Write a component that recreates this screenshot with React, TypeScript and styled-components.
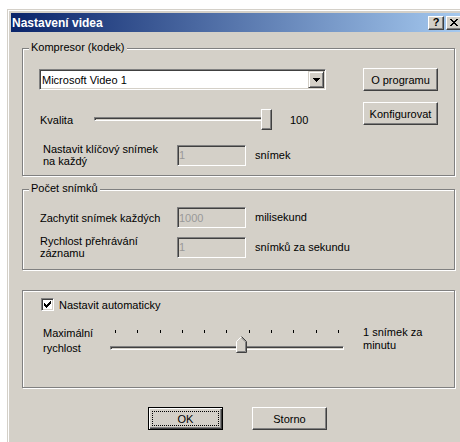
import React from "react";
import styled, { createGlobalStyle } from "styled-components";

const FACE = "#D4D0C8";
const SHADOW = "#808080";
const DARK = "#404040";
const HILITE = "#FFFFFF";

const GlobalStyle = createGlobalStyle`
  html, body { margin: 0; padding: 0; background: #fff; overflow: hidden; }
  body {
    font-family: "Liberation Sans", Arial, sans-serif;
    font-size: 11px;
    color: #000;
  }
`;

/* ---------- window frame ---------- */

const Window = styled.div`
  box-sizing: border-box;
  width: 461px;
  height: 450px;
  margin: 9px 0 0 7px;
  padding: 3px;
  background: ${FACE};
  border: 1px solid;
  border-color: ${FACE} ${DARK} ${DARK} ${FACE};
  box-shadow: inset 1px 1px ${HILITE}, inset -1px -1px ${SHADOW};
  display: flex;
  flex-direction: column;
`;

const TitleBar = styled.div`
  height: 19px;
  padding: 0 2px 0 1px;
  display: flex;
  align-items: center;
  justify-content: space-between;
  background: linear-gradient(to right, #0a246a, #a6caf0);
`;

const TitleText = styled.span`
  color: #fff;
  font-weight: bold;
  font-size: 12px;
  white-space: nowrap;
`;

const CaptionButtons = styled.div`
  display: flex;
  gap: 2px;
`;

const CaptionButton = styled.div`
  box-sizing: border-box;
  width: 16px;
  height: 14px;
  background: ${FACE};
  border: 1px solid;
  border-color: ${HILITE} ${DARK} ${DARK} ${HILITE};
  box-shadow: inset -1px -1px ${SHADOW};
  display: flex;
  align-items: center;
  justify-content: center;
  font-weight: bold;
  font-size: 11px;
  line-height: 1;
`;

const DialogBody = styled.div`
  display: flex;
  flex-direction: column;
  padding: 16px 0 0 11px;
`;

/* ---------- group boxes ---------- */

const Group = styled.section<{ $h: number; $mt: number; $pt: number; $pl: number }>`
  position: relative;
  box-sizing: border-box;
  width: 433px;
  height: ${(p) => p.$h}px;
  margin-top: ${(p) => p.$mt}px;
  padding: ${(p) => p.$pt}px 0 0 ${(p) => p.$pl}px;
  border: 1px solid ${SHADOW};
  box-shadow: inset 1px 1px ${HILITE}, 1px 1px ${HILITE};
`;

const GroupLabel = styled.span`
  position: absolute;
  top: -8px;
  left: 6px;
  padding: 0 2px;
  line-height: 13px;
  background: ${FACE};
  white-space: nowrap;
`;

/* ---------- controls ---------- */

const CodecLayout = styled.div`
  display: flex;
`;

const CodecMain = styled.div`
  width: 287px;
  display: flex;
  flex-direction: column;
`;

const SideButtons = styled.div`
  margin-left: 37px;
  display: flex;
  flex-direction: column;
  gap: 11px;
`;

const ComboBox = styled.div`
  box-sizing: border-box;
  height: 21px;
  margin-top: 1px;
  padding: 1px 1px 1px 2px;
  display: flex;
  align-items: center;
  justify-content: space-between;
  background: #fff;
  border: 1px solid;
  border-color: ${SHADOW} ${HILITE} ${HILITE} ${SHADOW};
  box-shadow: inset 1px 1px ${DARK}, inset -1px -1px ${FACE};
`;

const ComboText = styled.span`
  padding-top: 1px;
`;

const ComboArrow = styled.div`
  box-sizing: border-box;
  width: 16px;
  height: 17px;
  background: ${FACE};
  border: 1px solid;
  border-color: ${FACE} ${DARK} ${DARK} ${FACE};
  box-shadow: inset 1px 1px ${HILITE}, inset -1px -1px ${SHADOW};
  display: flex;
  align-items: center;
  justify-content: center;
`;

const QualityRow = styled.div`
  display: flex;
  align-items: center;
  height: 21px;
  margin-top: 19px;
`;

const QualityLabel = styled.span`
  box-sizing: border-box;
  width: 55px;
  padding-left: 1px;
`;

const Trackbar = styled.div<{ $w: number; $h: number }>`
  position: relative;
  width: ${(p) => p.$w}px;
  height: ${(p) => p.$h}px;
  display: flex;
  flex-direction: column;
`;

const Channel = styled.div<{ $mt: number }>`
  box-sizing: border-box;
  height: 4px;
  margin-top: ${(p) => p.$mt}px;
  border: 1px solid;
  border-color: ${SHADOW} ${HILITE} ${HILITE} ${SHADOW};
  box-shadow: inset 1px 1px ${DARK};
`;

const BoxThumb = styled.div`
  position: absolute;
  top: 0;
  right: 0;
  box-sizing: border-box;
  width: 11px;
  height: 21px;
  background: ${FACE};
  border: 1px solid;
  border-color: ${HILITE} ${DARK} ${DARK} ${HILITE};
  box-shadow: inset -1px -1px ${SHADOW};
`;

const PointerThumb = styled.svg`
  position: absolute;
  top: 10px;
  display: block;
`;

const TickRow = styled.div`
  display: flex;
  justify-content: space-between;
  padding: 0 5px;
  margin-top: 4px;
`;

const Tick = styled.span`
  width: 1px;
  height: 3px;
  background: #000;
`;

const ValueText = styled.span`
  margin-left: 18px;
`;

const FieldRow = styled.div<{ $mt: number }>`
  display: flex;
  align-items: center;
  margin-top: ${(p) => p.$mt}px;
`;

const FieldLabel = styled.span<{ $w: number; $indent: number }>`
  box-sizing: border-box;
  width: ${(p) => p.$w}px;
  padding-left: ${(p) => p.$indent}px;
  line-height: 12px;
`;

const TextField = styled.input`
  box-sizing: border-box;
  width: 69px;
  height: 21px;
  margin: 0;
  padding: 0 0 0 1px;
  font: inherit;
  color: #999;
  background: ${FACE};
  border: 1px solid;
  border-color: ${SHADOW} ${HILITE} ${HILITE} ${SHADOW};
  box-shadow: inset 1px 1px ${DARK}, inset -1px -1px ${FACE};
  outline: none;
  &:disabled { color: #999; }
`;

const Suffix = styled.span<{ $ml?: number; $lh?: number }>`
  margin-left: ${(p) => p.$ml ?? 9}px;
  line-height: ${(p) => p.$lh ?? 13}px;
  white-space: nowrap;
`;

const CheckRow = styled.label`
  display: flex;
  align-items: center;
  height: 13px;
`;

const CheckBox = styled.span`
  box-sizing: border-box;
  width: 13px;
  height: 13px;
  background: #fff;
  border: 1px solid;
  border-color: ${SHADOW} ${HILITE} ${HILITE} ${SHADOW};
  box-shadow: inset 1px 1px ${DARK}, inset -1px -1px ${FACE};
  display: flex;
  align-items: center;
  justify-content: center;
`;

const CheckText = styled.span`
  margin-left: 5px;
`;

const SpeedRow = styled.div`
  display: flex;
  align-items: flex-start;
  margin-top: 15px;
`;

const SpeedLabel = styled.span`
  box-sizing: border-box;
  width: 69px;
  padding-left: 2px;
  line-height: 15px;
`;

const ButtonRow = styled.div`
  box-sizing: border-box;
  width: 433px;
  padding-right: 2px;
  margin-top: 19px;
  display: flex;
  justify-content: center;
  gap: 29px;
`;

const PushButton = styled.button<{ $default?: boolean }>`
  position: relative;
  box-sizing: border-box;
  width: 75px;
  height: 23px;
  margin: 0;
  padding: 0;
  font: inherit;
  color: #000;
  background: ${FACE};
  border: 1px solid;
  border-color: ${(p) =>
    p.$default ? "#000" : `${HILITE} ${DARK} ${DARK} ${HILITE}`};
  box-shadow: ${(p) =>
    p.$default
      ? `inset 1px 1px ${HILITE}, inset -1px -1px ${DARK}, inset -2px -2px ${SHADOW}`
      : `inset -1px -1px ${SHADOW}`};

  ${(p) =>
    p.$default &&
    `
    &::after {
      content: "";
      position: absolute;
      inset: 3px;
      border: 1px dotted #000;
    }
  `}
`;

/* ---------- glyphs ---------- */

const CloseGlyph = () => (
  <svg width="8" height="7" viewBox="0 0 8 7" shapeRendering="crispEdges">
    <path
      d="M0 0h2v1H0z M6 0h2v1H6z M1 1h2v1H1z M5 1h2v1H5z M2 2h4v1H2z M3 3h2v1H3z M2 4h4v1H2z M1 5h2v1H1z M5 5h2v1H5z M0 6h2v1H0z M6 6h2v1H6z"
      fill="#000"
    />
  </svg>
);

const DownArrow = () => (
  <svg width="7" height="4" viewBox="0 0 7 4" shapeRendering="crispEdges">
    <path d="M0 0h7v1H0z M1 1h5v1H1z M2 2h3v1H2z M3 3h1v1H3z" fill="#000" />
  </svg>
);

const CheckMark = () => (
  <svg width="7" height="7" viewBox="0 0 7 7" shapeRendering="crispEdges">
    <path
      d="M6 0h1v1H6z M5 1h2v1H5z M0 2h1v1H0z M4 2h3v1H4z M0 3h2v1H0z M3 3h3v1H3z M0 4h5v1H0z M1 5h3v1H1z M2 6h1v1H2z"
      fill="#000"
    />
  </svg>
);

const UpPointerThumb = ({ left }: { left: number }) => (
  <PointerThumb width="11" height="17" viewBox="0 0 11 17" style={{ left }}>
    <polygon points="0.5,5.5 5.5,0.5 10.5,5.5 10.5,16.5 0.5,16.5" fill={FACE} />
    <polyline points="0.5,16 0.5,5.5 5.5,0.5" fill="none" stroke={HILITE} />
    <polyline points="5.5,0.5 10.5,5.5 10.5,16.5 0.5,16.5" fill="none" stroke={DARK} />
    <polyline points="5.5,1.9 9.5,5.9 9.5,15.5 1.5,15.5" fill="none" stroke={SHADOW} />
  </PointerThumb>
);

const TICKS = Array.from({ length: 11 }, (_, i) => i);

export default function App() {
  return (
    <>
      <GlobalStyle />
      <Window>
        <TitleBar>
          <TitleText>Nastavení videa</TitleText>
          <CaptionButtons>
            <CaptionButton>?</CaptionButton>
            <CaptionButton>
              <CloseGlyph />
            </CaptionButton>
          </CaptionButtons>
        </TitleBar>

        <DialogBody>
          <Group $h={128} $mt={0} $pt={19} $pl={16}>
            <GroupLabel>Kompresor (kodek)</GroupLabel>
            <CodecLayout>
              <CodecMain>
                <ComboBox>
                  <ComboText>Microsoft Video 1</ComboText>
                  <ComboArrow>
                    <DownArrow />
                  </ComboArrow>
                </ComboBox>

                <QualityRow>
                  <QualityLabel>Kvalita</QualityLabel>
                  <Trackbar $w={178} $h={21}>
                    <Channel $mt={8} />
                    <BoxThumb />
                  </Trackbar>
                  <ValueText>100</ValueText>
                </QualityRow>

                <FieldRow $mt={13}>
                  <FieldLabel $w={138} $indent={4}>
                    Nastavit klíčový snímek
                    <br />
                    na každý
                  </FieldLabel>
                  <TextField value="1" disabled readOnly />
                  <Suffix>snímek</Suffix>
                </FieldRow>
              </CodecMain>

              <SideButtons>
                <PushButton>O programu</PushButton>
                <PushButton>Konfigurovat</PushButton>
              </SideButtons>
            </CodecLayout>
          </Group>

          <Group $h={81} $mt={13} $pt={17} $pl={17}>
            <GroupLabel>Počet snímků</GroupLabel>
            <FieldRow $mt={0}>
              <FieldLabel $w={137} $indent={0}>
                Zachytit snímek každých
              </FieldLabel>
              <TextField value="1000" disabled readOnly />
              <Suffix>milisekund</Suffix>
            </FieldRow>
            <FieldRow $mt={7}>
              <FieldLabel $w={137} $indent={0}>
                Rychlost přehrávání
                <br />
                záznamu
              </FieldLabel>
              <TextField value="1" disabled readOnly />
              <Suffix>snímků za sekundu</Suffix>
            </FieldRow>
          </Group>

          <Group $h={98} $mt={20} $pt={7} $pl={18}>
            <CheckRow>
              <CheckBox>
                <CheckMark />
              </CheckBox>
              <CheckText>Nastavit automaticky</CheckText>
            </CheckRow>

            <SpeedRow>
              <SpeedLabel>
                Maximální
                <br />
                rychlost
              </SpeedLabel>
              <Trackbar $w={234} $h={28}>
                <TickRow>
                  {TICKS.map((t) => (
                    <Tick key={t} />
                  ))}
                </TickRow>
                <Channel $mt={13} />
                <UpPointerThumb left={126} />
              </Trackbar>
              <Suffix $ml={19} $lh={13}>
                1 snímek za
                <br />
                minutu
              </Suffix>
            </SpeedRow>
          </Group>

          <ButtonRow>
            <PushButton $default>OK</PushButton>
            <PushButton>Storno</PushButton>
          </ButtonRow>
        </DialogBody>
      </Window>
    </>
  );
}
